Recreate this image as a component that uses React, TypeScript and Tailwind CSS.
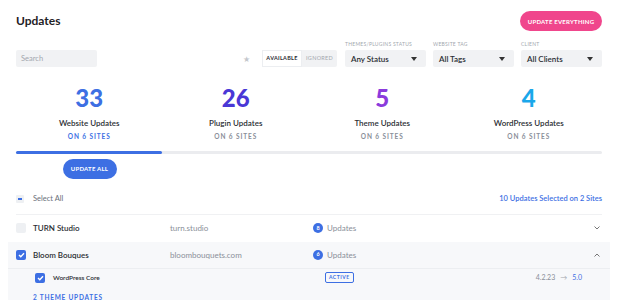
import React from 'react';

const stats = [
  { n: '33', label: 'Website Updates', color: 'text-[#3d6fe3]', sub: 'text-[#3d6fe3]' },
  { n: '26', label: 'Plugin Updates', color: 'text-[#4a37d6]', sub: 'text-[#8a8f99]' },
  { n: '5', label: 'Theme Updates', color: 'text-[#8b3bdc]', sub: 'text-[#8a8f99]' },
  { n: '4', label: 'WordPress Updates', color: 'text-[#1aa7ea]', sub: 'text-[#8a8f99]' },
];

const Caret = () => (
  <svg width="6" height="4" viewBox="0 0 6 4">
    <path d="M0 0h6L3 4z" fill="#333" />
  </svg>
);

const Select = ({ label, value }: { label: string; value: string }) => (
  <div className="flex flex-col w-[81px]">
    <span className="text-[5px] tracking-[0.05em] uppercase text-[#a3a7ae] mb-[3px] leading-none">{label}</span>
    <div className="h-[17px] bg-[#f1f2f4] rounded-[2px] flex items-center justify-between pl-[6px] pr-[9px]">
      <span className="text-[8px] font-semibold text-[#2b2e33]">{value}</span>
      <Caret />
    </div>
  </div>
);

const Check = ({ on }: { on: boolean }) =>
  on ? (
    <div className="w-[10px] h-[10px] rounded-[2px] bg-[#3d6fe3] flex items-center justify-center">
      <svg width="7" height="6" viewBox="0 0 7 6">
        <path d="M1 3l1.8 1.8L6 1.2" stroke="#fff" strokeWidth="1.4" fill="none" />
      </svg>
    </div>
  ) : (
    <div className="w-[10px] h-[10px] rounded-[2px] bg-[#eef0f3]" />
  );

const Chevron = ({ up }: { up?: boolean }) => (
  <svg width="6" height="4" viewBox="0 0 6 4">
    <path d={up ? 'M0.5 3.5L3 1l2.5 2.5' : 'M0.5 0.5L3 3l2.5-2.5'} stroke="#666" strokeWidth="0.9" fill="none" />
  </svg>
);

const SiteRow = ({ name, url, count, open }: { name: string; url: string; count: string; open?: boolean }) => (
  <div className={`h-[27px] flex items-center -mx-2 pl-2 pr-[10px] ${open ? 'bg-[#f7f8fa] border-b border-[#eceef1]' : ''}`}>
    <div className="w-[17px]"><Check on={!!open} /></div>
    <span className="w-[137px] text-[8px] font-semibold text-[#2b2e33]">{name}</span>
    <span className="w-[143px] text-[8px] text-[#8a8f99]">{url}</span>
    <div className="w-[10px] h-[10px] rounded-full bg-[#3d6fe3] text-white text-[5.5px] font-bold flex items-center justify-center">{count}</div>
    <span className="ml-[4px] text-[8px] text-[#8a8f99]">Updates</span>
    <div className="ml-auto"><Chevron up={open} /></div>
  </div>
);

const App = () => {
  return (
    <div className="w-[618px] h-[300px] overflow-hidden bg-white font-['Lato','Noto_Sans',sans-serif] px-4">
      <div className="flex items-center justify-between pt-[11px]">
        <h1 className="text-[12px] font-bold text-[#1f2226] leading-none">Updates</h1>
        <button className="h-[20px] w-[82px] rounded-full bg-[#f0468c] text-white text-[6px] font-bold tracking-[0.04em]">UPDATE EVERYTHING</button>
      </div>

      <div className="flex items-end mt-[11px]">
        <div className="w-[81px] h-[17px] bg-[#f1f2f4] rounded-[2px] flex items-center pl-[5px]">
          <span className="text-[7.5px] text-[#a3a7ae]">Search</span>
        </div>
        <div className="ml-auto h-[17px] flex items-center mr-[8px]">
          <span className="text-[8px] text-[#c4c7cc] mr-[12px] leading-none">★</span>
          <div className="flex h-[17px] rounded-[2px] bg-[#f1f2f4]">
            <span className="w-[40px] flex items-center justify-center bg-white border border-[#eceef1] text-[5.5px] font-bold tracking-[0.05em] text-[#2b2e33]">AVAILABLE</span>
            <span className="w-[35px] flex items-center justify-center text-[5.5px] tracking-[0.05em] text-[#a3a7ae]">IGNORED</span>
          </div>
        </div>
        <div className="flex gap-[7px]">
          <Select label="Themes/Plugins Status" value="Any Status" />
          <Select label="Website Tag" value="All Tags" />
          <Select label="Client" value="All Clients" />
        </div>
      </div>

      <div className="grid grid-cols-4 mt-[19px]">
        {stats.map((s) => (
          <div key={s.label} className="flex flex-col items-center">
            <span className={`text-[24px] font-black leading-none ${s.color}`}>{s.n}</span>
            <span className="mt-[9px] text-[8px] font-semibold text-[#2b2e33] leading-none">{s.label}</span>
            <span className={`mt-[7px] text-[6.5px] font-bold tracking-[0.14em] leading-none ${s.sub}`}>ON 6 SITES</span>
          </div>
        ))}
      </div>

      <div className="mt-[10px] h-[3px] bg-[#ebecef] rounded-full">
        <div className="w-[146px] h-[3px] bg-[#3d6fe3] rounded-full" />
      </div>

      <div className="w-[147px] flex justify-center mt-[5px]">
        <button className="h-[20px] w-[54px] rounded-full bg-[#3d6fe3] text-white text-[6px] font-bold tracking-[0.04em]">UPDATE ALL</button>
      </div>

      <div className="h-[30px] flex items-center border-b border-[#f0f1f3] mt-[6px]">
        <div className="w-[17px]">
          <div className="w-[8px] h-[8px] bg-[#eef0f3] rounded-[1px] flex items-center justify-center">
            <div className="w-[4px] h-[1.5px] bg-[#3d6fe3]" />
          </div>
        </div>
        <span className="text-[7.5px] text-[#6b7079]">Select All</span>
        <span className="ml-auto text-[7.5px] font-semibold text-[#3d6fe3]">10 Updates Selected on 2 Sites</span>
      </div>

      <SiteRow name="TURN Studio" url="turn.studio" count="8" />
      <SiteRow name="Bloom Bouques" url="bloombouquets.com" count="6" open />

      <div className="-mx-2 bg-[#f7f8fa] pl-[27px] pr-[28px]">
        <div className="h-[18px] flex items-center">
          <div className="w-[18px]"><Check on /></div>
          <span className="w-[272px] text-[6.5px] font-semibold text-[#2b2e33]">WordPress Core</span>
          <span className="h-[11px] px-[3px] flex items-center border border-[#3d6fe3] rounded-[2px] text-[5px] font-bold tracking-[0.1em] text-[#3d6fe3]">ACTIVE</span>
          <span className="ml-auto text-[7px] text-[#8a8f99]">4.2.23</span>
          <span className="mx-[5px] text-[7px] text-[#a3a7ae]">→</span>
          <span className="text-[7px] text-[#3d6fe3]">5.0</span>
        </div>
        <div className="-ml-[2px] pt-[6px] text-[6.5px] font-bold tracking-[0.12em] text-[#3d6fe3]">2 THEME UPDATES</div>
      </div>
    </div>
  );
};

export default App;
